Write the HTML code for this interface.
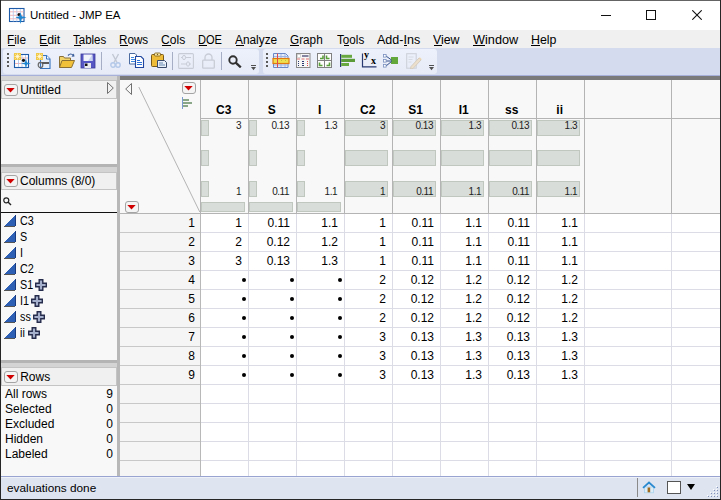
<!DOCTYPE html>
<html><head><meta charset="utf-8">
<style>
*{margin:0;padding:0;box-sizing:border-box}
html,body{width:721px;height:500px;overflow:hidden;background:#fff;font-family:"Liberation Sans",sans-serif;font-size:12px;color:#000}
.a{position:absolute}
.t{position:absolute;white-space:nowrap;line-height:14px;height:14px}
u{text-decoration:none;border-bottom:1px solid #000;display:inline-block;line-height:11px}
</style></head><body>
<div class="a" style="left:0px;top:0px;width:721px;height:500px;background:#fff"></div>
<svg class="a" style="left:8px;top:7px" width="19" height="18" viewBox="0 0 19 18"><rect x="1.5" y="1.5" width="14.5" height="13" fill="#fff" stroke="#1d5aa8" stroke-width="1.1"/><path d="M2 4.8h13.5M2 8.3h13.5M2 11.8h13.5" stroke="#f4a4a4" stroke-width="0.8"/><path d="M5.3 2v12.5M8.8 2v12.5M12.3 2v12.5" stroke="#b4c8ec" stroke-width="0.8"/><circle cx="11" cy="7.5" r="1.5" fill="#111"/><path d="M7.5 10.5L11.2 9.2 12.5 5.5 13.8 9.2 18.5 10.5 13.8 11.8 12.5 17 11.2 11.8z" fill="#1f86d0"/></svg>
<div class="t" style="left:30px;top:8px;font-size:11.5px;color:#000">Untitled - JMP EA</div>
<div class="a" style="left:601px;top:15px;width:10px;height:1px;background:#111"></div>
<div class="a" style="left:646px;top:10px;width:10px;height:10px;border:1px solid #111"></div>
<svg class="a" style="left:692px;top:10px" width="10" height="10" viewBox="0 0 10 10"><path d="M0.3 0.3L9.7 9.7M9.7 0.3L0.3 9.7" stroke="#111" stroke-width="1.1"/></svg>
<div class="a" style="left:1px;top:30px;width:719px;height:18px;background:#f0f0f0"></div>
<div class="t" style="left:7.40px;top:33px;transform:scaleX(0.983);transform-origin:0 0">File</div>
<div class="a" style="left:8px;top:45px;width:7px;height:1px;background:#000"></div>
<div class="t" style="left:39.20px;top:33px;transform:scaleX(1.025);transform-origin:0 0">Edit</div>
<div class="a" style="left:40px;top:45px;width:8px;height:1px;background:#000"></div>
<div class="t" style="left:73.20px;top:33px;transform:scaleX(0.957);transform-origin:0 0">Tables</div>
<div class="a" style="left:74px;top:45px;width:7px;height:1px;background:#000"></div>
<div class="t" style="left:119.20px;top:33px;transform:scaleX(0.973);transform-origin:0 0">Rows</div>
<div class="a" style="left:120px;top:45px;width:8px;height:1px;background:#000"></div>
<div class="t" style="left:161.20px;top:33px;transform:scaleX(1.008);transform-origin:0 0">Cols</div>
<div class="a" style="left:162px;top:45px;width:9px;height:1px;background:#000"></div>
<div class="t" style="left:198.40px;top:33px;transform:scaleX(0.923);transform-origin:0 0">DOE</div>
<div class="a" style="left:199px;top:45px;width:8px;height:1px;background:#000"></div>
<div class="t" style="left:235.20px;top:33px;transform:scaleX(0.988);transform-origin:0 0">Analyze</div>
<div class="a" style="left:236px;top:45px;width:8px;height:1px;background:#000"></div>
<div class="t" style="left:290.20px;top:33px;transform:scaleX(0.980);transform-origin:0 0">Graph</div>
<div class="a" style="left:290px;top:45px;width:9px;height:1px;background:#000"></div>
<div class="t" style="left:336.50px;top:33px;transform:scaleX(0.971);transform-origin:0 0">Tools</div>
<div class="a" style="left:344px;top:45px;width:5px;height:1px;background:#000"></div>
<div class="t" style="left:377.20px;top:33px;transform:scaleX(1.045);transform-origin:0 0">Add-Ins</div>
<div class="a" style="left:404px;top:45px;width:3px;height:1px;background:#000"></div>
<div class="t" style="left:433.20px;top:33px;transform:scaleX(1.027);transform-origin:0 0">View</div>
<div class="a" style="left:434px;top:45px;width:8px;height:1px;background:#000"></div>
<div class="t" style="left:472.50px;top:33px;transform:scaleX(1.059);transform-origin:0 0">Window</div>
<div class="a" style="left:473px;top:45px;width:12px;height:1px;background:#000"></div>
<div class="t" style="left:530.90px;top:33px;transform:scaleX(1.033);transform-origin:0 0">Help</div>
<div class="a" style="left:531px;top:45px;width:9px;height:1px;background:#000"></div>
<div class="a" style="left:1px;top:48px;width:719px;height:27px;background:#d5dbee"></div>
<div class="a" style="left:3px;top:49px;width:256px;height:25px;background:linear-gradient(#edf1fb,#e6ebf7);border-radius:3px"></div>
<div class="a" style="left:263px;top:49px;width:174px;height:25px;background:linear-gradient(#edf1fb,#e6ebf7);border-radius:3px"></div>
<div class="a" style="left:1px;top:75px;width:719px;height:1px;background:#a7b0d8"></div>
<div class="a" style="left:7px;top:53px;width:2px;height:2px;background:#5a5a5a"></div>
<div class="a" style="left:7px;top:57px;width:2px;height:2px;background:#5a5a5a"></div>
<div class="a" style="left:7px;top:61px;width:2px;height:2px;background:#5a5a5a"></div>
<div class="a" style="left:7px;top:65px;width:2px;height:2px;background:#5a5a5a"></div>
<div class="a" style="left:266px;top:53px;width:2px;height:2px;background:#5a5a5a"></div>
<div class="a" style="left:266px;top:57px;width:2px;height:2px;background:#5a5a5a"></div>
<div class="a" style="left:266px;top:61px;width:2px;height:2px;background:#5a5a5a"></div>
<div class="a" style="left:266px;top:65px;width:2px;height:2px;background:#5a5a5a"></div>
<div class="a" style="left:101px;top:52px;width:1px;height:18px;background:#a6aec6"></div>
<div class="a" style="left:172px;top:52px;width:1px;height:18px;background:#a6aec6"></div>
<div class="a" style="left:221px;top:52px;width:1px;height:18px;background:#a6aec6"></div>
<svg class="a" style="left:13px;top:52px" width="18" height="17" viewBox="0 0 18 17"><rect x="1.5" y="2.5" width="14" height="13" fill="#fff" stroke="#1d5aa8" stroke-width="1.1"/><path d="M2 6h13M2 11.5h13" stroke="#f0a0a0" stroke-width="0.8"/><path d="M5.5 3v12M9 3v12M12.5 3v12" stroke="#a8c0e8" stroke-width="0.8"/><rect x="1" y="1" width="7" height="7" fill="#f0c84a"/><path d="M4.5 1.5v6M1.5 4.5h6M2.3 2.3l4.4 4.4M6.7 2.3l-4.4 4.4" stroke="#fff3c0" stroke-width="0.8"/><circle cx="4.5" cy="4.5" r="1.1" fill="#fffbe8"/><circle cx="10.5" cy="8.3" r="1.6" fill="#111"/><path d="M8 11.5L12 10.6 13 6.5 14 10.6 17.8 11.5 14 12.4 13 16.5 12 12.4z" fill="#1f86d0"/></svg>
<svg class="a" style="left:35px;top:52px" width="18" height="17" viewBox="0 0 18 17"><path d="M5.5 3.5h6l3.5 3.5v9.5h-9.5z" fill="#e4eefa" stroke="#3673bd" stroke-width="1.1"/><path d="M11.5 3.5v3.5h3.5" fill="#fff" stroke="#3673bd" stroke-width="1"/><rect x="1" y="1" width="7" height="7" fill="#f0c84a"/><path d="M4.5 1.5v6M1.5 4.5h6M2.3 2.3l4.4 4.4M6.7 2.3l-4.4 4.4" stroke="#fff3c0" stroke-width="0.8"/><circle cx="4.5" cy="4.5" r="1.1" fill="#fffbe8"/><ellipse cx="5.5" cy="13" rx="2.3" ry="2.6" fill="none" stroke="#6a6a6a" stroke-width="1.2"/><rect x="7" y="10" width="7" height="2" fill="#5a5a5a"/></svg>
<svg class="a" style="left:58px;top:52px" width="18" height="17" viewBox="0 0 18 17"><path d="M1.5 4.5h4l1 1.5h6v9.5h-11z" fill="#f3d46a" stroke="#8a7034" stroke-width="1"/><path d="M4 8.5h12.5l-3 7h-12z" fill="#f2c13c" stroke="#8a7034" stroke-width="1"/><path d="M10 3.5q2.5-3 5.5 0" fill="none" stroke="#3b5d9a" stroke-width="1.2"/><path d="M13.5 4.8l3-0.3-0.6-3z" fill="#3b5d9a"/></svg>
<svg class="a" style="left:80px;top:53px" width="16" height="16" viewBox="0 0 16 16"><rect x="1" y="1" width="14" height="14" fill="#5656c4" stroke="#3a3a9a" stroke-width="0.8"/><rect x="3.5" y="1.5" width="9" height="6.5" fill="#f2f4fb"/><path d="M12 2l-4 6h4.5z" fill="#c8d4f0"/><rect x="4.5" y="10" width="6.5" height="5" fill="#e8eaf0"/><rect x="5" y="10.5" width="2.5" height="2.5" fill="#111"/></svg>
<svg class="a" style="left:110px;top:53px" width="11" height="16" viewBox="0 0 11 16"><path d="M2.5 1l4.5 8.5M8.5 1l-4.5 8.5" stroke="#c2c8d4" stroke-width="1.4" fill="none"/><circle cx="3" cy="12" r="2.2" fill="none" stroke="#b4c8e8" stroke-width="1.4"/><circle cx="8" cy="12" r="2.2" fill="none" stroke="#b4c8e8" stroke-width="1.4"/></svg>
<svg class="a" style="left:128px;top:53px" width="17" height="15" viewBox="0 0 17 15"><path d="M1.5 0.5h5.5l1.5 1.5v9h-7z" fill="#fff" stroke="#4a6aa0" stroke-width="1"/><path d="M3 4.5h3M3 6.5h4M3 8.5h4" stroke="#3a86e0" stroke-width="1"/><path d="M7.5 3.5h5.5l2.5 2.5v8.5h-8z" fill="#fff" stroke="#2046a0" stroke-width="1.1"/><path d="M9 7.5h3M9 9.5h5M9 11.5h5" stroke="#2a70d8" stroke-width="1"/></svg>
<svg class="a" style="left:150px;top:52px" width="18" height="17" viewBox="0 0 18 17"><rect x="1.5" y="2.5" width="12" height="12" rx="1" fill="#eebc38" stroke="#7a5a18" stroke-width="1"/><rect x="4.5" y="1" width="6" height="3" rx="1" fill="#fbe9a8" stroke="#7a5a18" stroke-width="0.8"/><circle cx="7.5" cy="2.5" r="0.7" fill="#7a5a18"/><path d="M7.5 8.5h7l2 2v5h-9z" fill="#e8eef8" stroke="#3a4a6a" stroke-width="1"/><path d="M9 11h4M9 13h6" stroke="#5a7aa8" stroke-width="0.9"/></svg>
<svg class="a" style="left:178px;top:53px" width="16" height="16" viewBox="0 0 16 16"><rect x="0.6" y="0.6" width="14.8" height="14.8" rx="1" fill="none" stroke="#c8ccd6" stroke-width="1.1"/><path d="M3 4.5h10M3 11h10" stroke="#c8ccd6" stroke-width="1.1"/><ellipse cx="6" cy="4.5" rx="1.5" ry="2.2" fill="#e9eef9" stroke="#c8ccd6"/><ellipse cx="10" cy="11" rx="1.5" ry="2.2" fill="#e9eef9" stroke="#c8ccd6"/></svg>
<svg class="a" style="left:202px;top:53px" width="13" height="16" viewBox="0 0 13 16"><path d="M3 7V4.5a3.5 3.5 0 0 1 7 0V7" fill="none" stroke="#c8ccd6" stroke-width="1.3"/><rect x="0.7" y="7.2" width="11.6" height="8" rx="0.8" fill="none" stroke="#c8ccd6" stroke-width="1.3"/></svg>
<svg class="a" style="left:228px;top:55px" width="14" height="13" viewBox="0 0 14 13"><circle cx="5" cy="5" r="3.7" fill="none" stroke="#303030" stroke-width="1.9"/><path d="M7.7 7.7L12.8 12.4" stroke="#303030" stroke-width="2.3"/></svg>
<div class="a" style="left:251px;top:65px;width:5px;height:1px;background:#505050"></div>
<svg class="a" style="left:251px;top:67px" width="5" height="4" viewBox="0 0 5 4"><path d="M0 0h5l-2.5 3.2z" fill="#505050"/></svg>
<div class="a" style="left:429px;top:65px;width:5px;height:1px;background:#505050"></div>
<svg class="a" style="left:429px;top:67px" width="5" height="4" viewBox="0 0 5 4"><path d="M0 0h5l-2.5 3.2z" fill="#505050"/></svg>
<svg class="a" style="left:272px;top:52px" width="18" height="17" viewBox="0 0 18 17"><path d="M1.5 1.5h12l2.5 2.5v11.5h-14.5z" fill="#e4ecfa" stroke="#6a88c8" stroke-width="1"/><path d="M2 4.5h13.5M2 13h13.5" stroke="#9ab0e0" stroke-width="0.9"/><path d="M9 2v13M13 2v13" stroke="#9ab0e0" stroke-width="0.9"/><rect x="1" y="6.5" width="16" height="5" fill="#f0e050" stroke="#e07a10" stroke-width="1.2"/><path d="M5.5 1.5v14" stroke="#e04a4a" stroke-width="1"/><path d="M9 8.5h1M13 8.5h1" stroke="#c0c040"/></svg>
<svg class="a" style="left:295px;top:52px" width="16" height="17" viewBox="0 0 16 17"><rect x="1.5" y="1.5" width="13.5" height="14" fill="#f6f6f6" stroke="#8a8a8a" stroke-width="1"/><rect x="2.5" y="2.5" width="3" height="3" fill="#fff" stroke="#c0c0c0" stroke-width="0.6"/><path d="M7 4h6.5" stroke="#3a3a6a" stroke-width="1.2"/><path d="M2 7h3M6.5 7h3M11 7h3" stroke="#e07070" stroke-width="1"/><path d="M3 9.5h1M3 11.5h1M3 13.5h1M7 9.5h2M7 11.5h2M7 13.5h2" stroke="#2a3a70" stroke-width="1.1"/><path d="M12 9.5h1M12 11.5h1M12 13.5h1" stroke="#e04a4a" stroke-width="1.1"/></svg>
<svg class="a" style="left:316px;top:52px" width="17" height="17" viewBox="0 0 17 17"><rect x="1.5" y="1.5" width="14" height="14" fill="#fdfdfd" stroke="#808080" stroke-width="1"/><path d="M8.5 1.5v14M1.5 8.5h14" stroke="#808080" stroke-width="1"/><path d="M4 6.5h3v-3M10.5 3.5v3h3M3.5 10.5v3h3M10.5 13.5h3v-3" stroke="#5aa03a" stroke-width="1.6" fill="none"/></svg>
<svg class="a" style="left:340px;top:54px" width="16" height="13" viewBox="0 0 16 13"><rect x="0" y="0" width="1.2" height="13" fill="#283870"/><rect x="1.2" y="0.8" width="10.8" height="3" fill="#68a840"/><rect x="1.2" y="4.8" width="13.8" height="3.2" fill="#5a9a38"/><rect x="1.2" y="9" width="7.8" height="3" fill="#68a840"/></svg>
<svg class="a" style="left:361px;top:53px" width="16" height="15" viewBox="0 0 16 15"><path d="M1.5 0.5v13.3H15.5" fill="none" stroke="#283870" stroke-width="1.2"/></svg>
<div class="t" style="left:364px;top:50px;font-size:10px;font-weight:bold;font-family:'Liberation Serif',serif;line-height:10px;height:10px">y</div>
<div class="t" style="left:371px;top:55.5px;font-size:10px;font-weight:bold;font-family:'Liberation Serif',serif;line-height:10px;height:10px">x</div>
<svg class="a" style="left:383px;top:54px" width="16" height="14" viewBox="0 0 16 14"><rect x="8" y="3" width="7" height="7" fill="#62a83a"/><path d="M3 2l5.5 4M3 7h5.5M3 12l5.5-4.5" stroke="#34508a" stroke-width="1"/><rect x="0.5" y="0.5" width="2.6" height="2.6" fill="#fff" stroke="#7a90c0" stroke-width="0.8"/><rect x="0.5" y="5.5" width="2.6" height="2.6" fill="#fff" stroke="#7a90c0" stroke-width="0.8"/><rect x="0.5" y="10.5" width="2.6" height="2.6" fill="#fff" stroke="#7a90c0" stroke-width="0.8"/></svg>
<svg class="a" style="left:406px;top:53px" width="16" height="16" viewBox="0 0 16 16"><rect x="0.7" y="0.7" width="9.5" height="14.5" fill="none" stroke="#cdd1d9" stroke-width="1.1"/><path d="M2.5 4h5M2.5 6.5h4M2.5 9h3" stroke="#d4d8e0" stroke-width="0.9"/><path d="M5 13.5l8-8.5 2 2-8 8.5-2.5 0.5z" fill="#ece0cc" stroke="#d4cabc" stroke-width="0.9"/><path d="M13 5l2 2 0.8-0.8-2-2z" fill="#f0d8b0"/></svg>
<div class="a" style="left:1px;top:76px;width:116px;height:4px;background:#d4d4d4"></div>
<div class="a" style="left:120px;top:76px;width:600px;height:4px;background:#7a7a7a"></div>
<div class="a" style="left:117px;top:76px;width:3px;height:401px;background:#b8b8b8"></div>
<div class="a" style="left:1px;top:80px;width:116px;height:84px;background:#f8f8f8"></div>
<div class="a" style="left:1px;top:80px;width:116px;height:19px;background:#f0f0f0;border:1px solid #c4c4c4"></div>
<div class="a" style="left:4px;top:84px;width:14px;height:12px;border:1px solid #a4a4a4;border-radius:3px;background:#f4f4f4"></div>
<svg class="a" style="left:6px;top:88px" width="9" height="5" viewBox="0 0 9 5"><path d="M0.3 0h8.4l-4.2 4.6z" fill="#d00000"/></svg>
<div class="t" style="left:20.2px;top:83px;font-size:12px">Untitled</div>
<svg class="a" style="left:106px;top:81px" width="9" height="14" viewBox="0 0 9 14"><path d="M1.5 1.5L7.3 7 1.5 12.5z" fill="none" stroke="#707070" stroke-width="1"/></svg>
<div class="a" style="left:1px;top:164px;width:116px;height:3px;background:#b4b4b4"></div>
<div class="a" style="left:1px;top:167px;width:116px;height:5px;background:#d4d4d4"></div>
<div class="a" style="left:1px;top:172px;width:116px;height:188px;background:#f8f8f8"></div>
<div class="a" style="left:1px;top:172px;width:116px;height:18px;background:#f0f0f0;border:1px solid #c4c4c4"></div>
<div class="a" style="left:4px;top:175px;width:14px;height:12px;border:1px solid #a4a4a4;border-radius:3px;background:#f4f4f4"></div>
<svg class="a" style="left:6px;top:179px" width="9" height="5" viewBox="0 0 9 5"><path d="M0.3 0h8.4l-4.2 4.6z" fill="#d00000"/></svg>
<div class="t" style="left:20px;top:174px;font-size:12px">Columns (8/0)</div>
<svg class="a" style="left:3px;top:197px" width="9" height="9" viewBox="0 0 9 9"><circle cx="3.3" cy="3.3" r="2.5" fill="none" stroke="#222" stroke-width="1.2"/><path d="M5 5l3 3" stroke="#222" stroke-width="1.4"/></svg>
<div class="a" style="left:1px;top:212px;width:116px;height:1px;background:#111"></div>
<svg class="a" style="left:4px;top:215px" width="12" height="12" viewBox="0 0 12 12" shape-rendering="crispEdges"><path d="M11 0V11H0z" fill="#2d5fb4"/><path d="M11 11H0" stroke="#555"/><path d="M11 0v11" stroke="#1a3a80"/></svg>
<div class="t" style="left:19.6px;top:214px;font-size:12px;transform:scaleX(0.9);transform-origin:0 0">C3</div>
<svg class="a" style="left:4px;top:231px" width="12" height="12" viewBox="0 0 12 12" shape-rendering="crispEdges"><path d="M11 0V11H0z" fill="#2d5fb4"/><path d="M11 11H0" stroke="#555"/><path d="M11 0v11" stroke="#1a3a80"/></svg>
<div class="t" style="left:19.6px;top:230px;font-size:12px;transform:scaleX(0.9);transform-origin:0 0">S</div>
<svg class="a" style="left:4px;top:247px" width="12" height="12" viewBox="0 0 12 12" shape-rendering="crispEdges"><path d="M11 0V11H0z" fill="#2d5fb4"/><path d="M11 11H0" stroke="#555"/><path d="M11 0v11" stroke="#1a3a80"/></svg>
<div class="t" style="left:19.6px;top:246px;font-size:12px;transform:scaleX(0.9);transform-origin:0 0">I</div>
<svg class="a" style="left:4px;top:263px" width="12" height="12" viewBox="0 0 12 12" shape-rendering="crispEdges"><path d="M11 0V11H0z" fill="#2d5fb4"/><path d="M11 11H0" stroke="#555"/><path d="M11 0v11" stroke="#1a3a80"/></svg>
<div class="t" style="left:19.6px;top:262px;font-size:12px;transform:scaleX(0.9);transform-origin:0 0">C2</div>
<svg class="a" style="left:4px;top:279px" width="12" height="12" viewBox="0 0 12 12" shape-rendering="crispEdges"><path d="M11 0V11H0z" fill="#2d5fb4"/><path d="M11 11H0" stroke="#555"/><path d="M11 0v11" stroke="#1a3a80"/></svg>
<div class="t" style="left:19.6px;top:278px;font-size:12px;transform:scaleX(0.9);transform-origin:0 0">S1</div>
<svg class="a" style="left:35px;top:279px" width="12" height="12" viewBox="0 0 12 12"><path d="M4.2 0.7h3.6v3.5h3.5v3.6h-3.5v3.5h-3.6v-3.5h-3.5v-3.6h3.5z" fill="#a4b0cc" stroke="#252c4c" stroke-width="1.4"/></svg>
<svg class="a" style="left:4px;top:295px" width="12" height="12" viewBox="0 0 12 12" shape-rendering="crispEdges"><path d="M11 0V11H0z" fill="#2d5fb4"/><path d="M11 11H0" stroke="#555"/><path d="M11 0v11" stroke="#1a3a80"/></svg>
<div class="t" style="left:19.6px;top:294px;font-size:12px;transform:scaleX(0.9);transform-origin:0 0">I1</div>
<svg class="a" style="left:31px;top:295px" width="12" height="12" viewBox="0 0 12 12"><path d="M4.2 0.7h3.6v3.5h3.5v3.6h-3.5v3.5h-3.6v-3.5h-3.5v-3.6h3.5z" fill="#a4b0cc" stroke="#252c4c" stroke-width="1.4"/></svg>
<svg class="a" style="left:4px;top:311px" width="12" height="12" viewBox="0 0 12 12" shape-rendering="crispEdges"><path d="M11 0V11H0z" fill="#2d5fb4"/><path d="M11 11H0" stroke="#555"/><path d="M11 0v11" stroke="#1a3a80"/></svg>
<div class="t" style="left:19.6px;top:310px;font-size:12px;transform:scaleX(0.9);transform-origin:0 0">ss</div>
<svg class="a" style="left:33px;top:311px" width="12" height="12" viewBox="0 0 12 12"><path d="M4.2 0.7h3.6v3.5h3.5v3.6h-3.5v3.5h-3.6v-3.5h-3.5v-3.6h3.5z" fill="#a4b0cc" stroke="#252c4c" stroke-width="1.4"/></svg>
<svg class="a" style="left:4px;top:327px" width="12" height="12" viewBox="0 0 12 12" shape-rendering="crispEdges"><path d="M11 0V11H0z" fill="#2d5fb4"/><path d="M11 11H0" stroke="#555"/><path d="M11 0v11" stroke="#1a3a80"/></svg>
<div class="t" style="left:19.6px;top:326px;font-size:12px;transform:scaleX(0.9);transform-origin:0 0">ii</div>
<svg class="a" style="left:28px;top:327px" width="12" height="12" viewBox="0 0 12 12"><path d="M4.2 0.7h3.6v3.5h3.5v3.6h-3.5v3.5h-3.6v-3.5h-3.5v-3.6h3.5z" fill="#a4b0cc" stroke="#252c4c" stroke-width="1.4"/></svg>
<div class="a" style="left:1px;top:360px;width:116px;height:3px;background:#b4b4b4"></div>
<div class="a" style="left:1px;top:363px;width:116px;height:4px;background:#d4d4d4"></div>
<div class="a" style="left:1px;top:367px;width:116px;height:109px;background:#f8f8f8"></div>
<div class="a" style="left:1px;top:367px;width:116px;height:19px;background:#f0f0f0;border:1px solid #c4c4c4"></div>
<div class="a" style="left:4px;top:371px;width:14px;height:12px;border:1px solid #a4a4a4;border-radius:3px;background:#f4f4f4"></div>
<svg class="a" style="left:6px;top:375px" width="9" height="5" viewBox="0 0 9 5"><path d="M0.3 0h8.4l-4.2 4.6z" fill="#d00000"/></svg>
<div class="t" style="left:20.2px;top:370px;font-size:12px">Rows</div>
<div class="t" style="left:5px;top:387px;font-size:12px">All rows</div>
<div class="t" style="right:608px;top:387px;text-align:right;font-size:12px">9</div>
<div class="t" style="left:5px;top:402px;font-size:12px">Selected</div>
<div class="t" style="right:608px;top:402px;text-align:right;font-size:12px">0</div>
<div class="t" style="left:5px;top:417px;font-size:12px">Excluded</div>
<div class="t" style="right:608px;top:417px;text-align:right;font-size:12px">0</div>
<div class="t" style="left:5px;top:432px;font-size:12px">Hidden</div>
<div class="t" style="right:608px;top:432px;text-align:right;font-size:12px">0</div>
<div class="t" style="left:5px;top:447px;font-size:12px">Labeled</div>
<div class="t" style="right:608px;top:447px;text-align:right;font-size:12px">0</div>
<div class="a" style="left:120px;top:80px;width:600px;height:133px;background:#f8f8f8"></div>
<div class="a" style="left:120px;top:213px;width:80px;height:263px;background:#f5f5f5"></div>
<div class="a" style="left:201px;top:214px;width:519px;height:262px;background:#fff"></div>
<div class="a" style="left:120px;top:232px;width:80px;height:1px;background:#c8c8c8"></div>
<div class="a" style="left:201px;top:232px;width:519px;height:1px;background:#dcdce6"></div>
<div class="a" style="left:120px;top:251px;width:80px;height:1px;background:#c8c8c8"></div>
<div class="a" style="left:201px;top:251px;width:519px;height:1px;background:#dcdce6"></div>
<div class="a" style="left:120px;top:270px;width:80px;height:1px;background:#c8c8c8"></div>
<div class="a" style="left:201px;top:270px;width:519px;height:1px;background:#dcdce6"></div>
<div class="a" style="left:120px;top:289px;width:80px;height:1px;background:#c8c8c8"></div>
<div class="a" style="left:201px;top:289px;width:519px;height:1px;background:#dcdce6"></div>
<div class="a" style="left:120px;top:308px;width:80px;height:1px;background:#c8c8c8"></div>
<div class="a" style="left:201px;top:308px;width:519px;height:1px;background:#dcdce6"></div>
<div class="a" style="left:120px;top:327px;width:80px;height:1px;background:#c8c8c8"></div>
<div class="a" style="left:201px;top:327px;width:519px;height:1px;background:#dcdce6"></div>
<div class="a" style="left:120px;top:346px;width:80px;height:1px;background:#c8c8c8"></div>
<div class="a" style="left:201px;top:346px;width:519px;height:1px;background:#dcdce6"></div>
<div class="a" style="left:120px;top:365px;width:80px;height:1px;background:#c8c8c8"></div>
<div class="a" style="left:201px;top:365px;width:519px;height:1px;background:#dcdce6"></div>
<div class="a" style="left:120px;top:384px;width:80px;height:1px;background:#c8c8c8"></div>
<div class="a" style="left:201px;top:384px;width:519px;height:1px;background:#dcdce6"></div>
<div class="a" style="left:120px;top:403px;width:80px;height:1px;background:#c8c8c8"></div>
<div class="a" style="left:201px;top:403px;width:519px;height:1px;background:#dcdce6"></div>
<div class="a" style="left:120px;top:422px;width:80px;height:1px;background:#c8c8c8"></div>
<div class="a" style="left:201px;top:422px;width:519px;height:1px;background:#dcdce6"></div>
<div class="a" style="left:120px;top:441px;width:80px;height:1px;background:#c8c8c8"></div>
<div class="a" style="left:201px;top:441px;width:519px;height:1px;background:#dcdce6"></div>
<div class="a" style="left:120px;top:460px;width:80px;height:1px;background:#c8c8c8"></div>
<div class="a" style="left:201px;top:460px;width:519px;height:1px;background:#dcdce6"></div>
<div class="a" style="left:248px;top:213px;width:1px;height:263px;background:#dcdce6"></div>
<div class="a" style="left:296px;top:213px;width:1px;height:263px;background:#dcdce6"></div>
<div class="a" style="left:344px;top:213px;width:1px;height:263px;background:#dcdce6"></div>
<div class="a" style="left:392px;top:213px;width:1px;height:263px;background:#dcdce6"></div>
<div class="a" style="left:440px;top:213px;width:1px;height:263px;background:#dcdce6"></div>
<div class="a" style="left:488px;top:213px;width:1px;height:263px;background:#dcdce6"></div>
<div class="a" style="left:536px;top:213px;width:1px;height:263px;background:#dcdce6"></div>
<div class="a" style="left:584px;top:213px;width:1px;height:263px;background:#dcdce6"></div>
<div class="a" style="left:671px;top:213px;width:1px;height:263px;background:#dcdce6"></div>
<div class="a" style="left:200px;top:213px;width:1px;height:263px;background:#b8b8b8"></div>
<div class="a" style="left:200px;top:80px;width:1px;height:133px;background:#b4b4b4"></div>
<div class="a" style="left:248px;top:80px;width:1px;height:133px;background:#b4b4b4"></div>
<div class="a" style="left:296px;top:80px;width:1px;height:133px;background:#b4b4b4"></div>
<div class="a" style="left:344px;top:80px;width:1px;height:133px;background:#b4b4b4"></div>
<div class="a" style="left:392px;top:80px;width:1px;height:133px;background:#b4b4b4"></div>
<div class="a" style="left:440px;top:80px;width:1px;height:133px;background:#b4b4b4"></div>
<div class="a" style="left:488px;top:80px;width:1px;height:133px;background:#b4b4b4"></div>
<div class="a" style="left:536px;top:80px;width:1px;height:133px;background:#b4b4b4"></div>
<div class="a" style="left:584px;top:80px;width:1px;height:133px;background:#b4b4b4"></div>
<div class="a" style="left:671px;top:80px;width:1px;height:133px;background:#b4b4b4"></div>
<div class="a" style="left:200px;top:118px;width:520px;height:1px;background:#b4b4b4"></div>
<div class="a" style="left:120px;top:213px;width:600px;height:1px;background:#b4b4b4"></div>
<svg class="a" style="left:120px;top:80px" width="80" height="134" viewBox="0 0 80 134"><path d="M18.8 7L79.8 132" stroke="#b4b4b4" stroke-width="1" fill="none"/></svg>
<svg class="a" style="left:125px;top:82px" width="9" height="14" viewBox="0 0 9 14"><path d="M6.5 1.5L0.7 7 6.5 12.5z" fill="none" stroke="#707070" stroke-width="1"/></svg>
<div class="a" style="left:182px;top:82px;width:14px;height:12px;border:1px solid #a4a4a4;border-radius:3px;background:#f4f4f4"></div>
<svg class="a" style="left:184px;top:86px" width="9" height="5" viewBox="0 0 9 5"><path d="M0.3 0h8.4l-4.2 4.6z" fill="#d00000"/></svg>
<div class="a" style="left:182px;top:97px;width:1px;height:12px;background:#7a9ad0"></div>
<div class="a" style="left:183px;top:99px;width:6px;height:2px;background:#8aa888"></div>
<div class="a" style="left:183px;top:102px;width:9px;height:2px;background:#8aa888"></div>
<div class="a" style="left:183px;top:105px;width:5px;height:2px;background:#8aa888"></div>
<div class="a" style="left:125px;top:201px;width:14px;height:12px;border:1px solid #a4a4a4;border-radius:3px;background:#f4f4f4"></div>
<svg class="a" style="left:127px;top:205px" width="9" height="5" viewBox="0 0 9 5"><path d="M0.3 0h8.4l-4.2 4.6z" fill="#d00000"/></svg>
<div class="t" style="left:173.7px;top:103px;width:100px;text-align:center;font-weight:bold;font-size:12px">C3</div>
<div class="t" style="left:221.7px;top:103px;width:100px;text-align:center;font-weight:bold;font-size:12px">S</div>
<div class="t" style="left:269.7px;top:103px;width:100px;text-align:center;font-weight:bold;font-size:12px">I</div>
<div class="t" style="left:317.7px;top:103px;width:100px;text-align:center;font-weight:bold;font-size:12px">C2</div>
<div class="t" style="left:365.7px;top:103px;width:100px;text-align:center;font-weight:bold;font-size:12px">S1</div>
<div class="t" style="left:413.7px;top:103px;width:100px;text-align:center;font-weight:bold;font-size:12px">I1</div>
<div class="t" style="left:461.7px;top:103px;width:100px;text-align:center;font-weight:bold;font-size:12px">ss</div>
<div class="t" style="left:509.70000000000005px;top:103px;width:100px;text-align:center;font-weight:bold;font-size:12px">ii</div>
<div class="a" style="left:201px;top:120px;width:8px;height:16px;background:#d9ddd9;border:1px solid #bfc7bf"></div>
<div class="a" style="left:201px;top:150px;width:8px;height:16px;background:#d9ddd9;border:1px solid #bfc7bf"></div>
<div class="a" style="left:201px;top:181px;width:8px;height:16px;background:#d9ddd9;border:1px solid #bfc7bf"></div>
<div class="a" style="left:201px;top:202px;width:44px;height:10px;background:#d9ddd9;border:1px solid #bfc7bf"></div>
<div class="t" style="right:480px;top:119px;text-align:right;font-size:10px;letter-spacing:-0.5px;color:#222">3</div>
<div class="t" style="right:480px;top:185px;text-align:right;font-size:10px;letter-spacing:-0.5px;color:#222">1</div>
<div class="a" style="left:249px;top:120px;width:8px;height:16px;background:#d9ddd9;border:1px solid #bfc7bf"></div>
<div class="a" style="left:249px;top:150px;width:8px;height:16px;background:#d9ddd9;border:1px solid #bfc7bf"></div>
<div class="a" style="left:249px;top:181px;width:8px;height:16px;background:#d9ddd9;border:1px solid #bfc7bf"></div>
<div class="a" style="left:249px;top:202px;width:44px;height:10px;background:#d9ddd9;border:1px solid #bfc7bf"></div>
<div class="t" style="right:432px;top:119px;text-align:right;font-size:10px;letter-spacing:-0.5px;color:#222">0.13</div>
<div class="t" style="right:432px;top:185px;text-align:right;font-size:10px;letter-spacing:-0.5px;color:#222">0.11</div>
<div class="a" style="left:297px;top:120px;width:8px;height:16px;background:#d9ddd9;border:1px solid #bfc7bf"></div>
<div class="a" style="left:297px;top:150px;width:8px;height:16px;background:#d9ddd9;border:1px solid #bfc7bf"></div>
<div class="a" style="left:297px;top:181px;width:8px;height:16px;background:#d9ddd9;border:1px solid #bfc7bf"></div>
<div class="a" style="left:297px;top:202px;width:44px;height:10px;background:#d9ddd9;border:1px solid #bfc7bf"></div>
<div class="t" style="right:384px;top:119px;text-align:right;font-size:10px;letter-spacing:-0.5px;color:#222">1.3</div>
<div class="t" style="right:384px;top:185px;text-align:right;font-size:10px;letter-spacing:-0.5px;color:#222">1.1</div>
<div class="a" style="left:345px;top:120px;width:43px;height:16px;background:#d9ddd9;border:1px solid #bfc7bf"></div>
<div class="a" style="left:345px;top:150px;width:43px;height:16px;background:#d9ddd9;border:1px solid #bfc7bf"></div>
<div class="a" style="left:345px;top:181px;width:43px;height:16px;background:#d9ddd9;border:1px solid #bfc7bf"></div>
<div class="t" style="right:336px;top:119px;text-align:right;font-size:10px;letter-spacing:-0.5px;color:#222">3</div>
<div class="t" style="right:336px;top:185px;text-align:right;font-size:10px;letter-spacing:-0.5px;color:#222">1</div>
<div class="a" style="left:393px;top:120px;width:43px;height:16px;background:#d9ddd9;border:1px solid #bfc7bf"></div>
<div class="a" style="left:393px;top:150px;width:43px;height:16px;background:#d9ddd9;border:1px solid #bfc7bf"></div>
<div class="a" style="left:393px;top:181px;width:43px;height:16px;background:#d9ddd9;border:1px solid #bfc7bf"></div>
<div class="t" style="right:288px;top:119px;text-align:right;font-size:10px;letter-spacing:-0.5px;color:#222">0.13</div>
<div class="t" style="right:288px;top:185px;text-align:right;font-size:10px;letter-spacing:-0.5px;color:#222">0.11</div>
<div class="a" style="left:441px;top:120px;width:43px;height:16px;background:#d9ddd9;border:1px solid #bfc7bf"></div>
<div class="a" style="left:441px;top:150px;width:43px;height:16px;background:#d9ddd9;border:1px solid #bfc7bf"></div>
<div class="a" style="left:441px;top:181px;width:43px;height:16px;background:#d9ddd9;border:1px solid #bfc7bf"></div>
<div class="t" style="right:240px;top:119px;text-align:right;font-size:10px;letter-spacing:-0.5px;color:#222">1.3</div>
<div class="t" style="right:240px;top:185px;text-align:right;font-size:10px;letter-spacing:-0.5px;color:#222">1.1</div>
<div class="a" style="left:489px;top:120px;width:43px;height:16px;background:#d9ddd9;border:1px solid #bfc7bf"></div>
<div class="a" style="left:489px;top:150px;width:43px;height:16px;background:#d9ddd9;border:1px solid #bfc7bf"></div>
<div class="a" style="left:489px;top:181px;width:43px;height:16px;background:#d9ddd9;border:1px solid #bfc7bf"></div>
<div class="t" style="right:192px;top:119px;text-align:right;font-size:10px;letter-spacing:-0.5px;color:#222">0.13</div>
<div class="t" style="right:192px;top:185px;text-align:right;font-size:10px;letter-spacing:-0.5px;color:#222">0.11</div>
<div class="a" style="left:537px;top:120px;width:43px;height:16px;background:#d9ddd9;border:1px solid #bfc7bf"></div>
<div class="a" style="left:537px;top:150px;width:43px;height:16px;background:#d9ddd9;border:1px solid #bfc7bf"></div>
<div class="a" style="left:537px;top:181px;width:43px;height:16px;background:#d9ddd9;border:1px solid #bfc7bf"></div>
<div class="t" style="right:144px;top:119px;text-align:right;font-size:10px;letter-spacing:-0.5px;color:#222">1.3</div>
<div class="t" style="right:144px;top:185px;text-align:right;font-size:10px;letter-spacing:-0.5px;color:#222">1.1</div>
<div class="t" style="right:526px;top:216px;text-align:right;font-size:12px">1</div>
<div class="t" style="right:479px;top:216px;text-align:right;font-size:12px">1</div>
<div class="t" style="right:431px;top:216px;text-align:right;font-size:12px">0.11</div>
<div class="t" style="right:383px;top:216px;text-align:right;font-size:12px">1.1</div>
<div class="t" style="right:335px;top:216px;text-align:right;font-size:12px">1</div>
<div class="t" style="right:287px;top:216px;text-align:right;font-size:12px">0.11</div>
<div class="t" style="right:239px;top:216px;text-align:right;font-size:12px">1.1</div>
<div class="t" style="right:191px;top:216px;text-align:right;font-size:12px">0.11</div>
<div class="t" style="right:143px;top:216px;text-align:right;font-size:12px">1.1</div>
<div class="t" style="right:526px;top:235px;text-align:right;font-size:12px">2</div>
<div class="t" style="right:479px;top:235px;text-align:right;font-size:12px">2</div>
<div class="t" style="right:431px;top:235px;text-align:right;font-size:12px">0.12</div>
<div class="t" style="right:383px;top:235px;text-align:right;font-size:12px">1.2</div>
<div class="t" style="right:335px;top:235px;text-align:right;font-size:12px">1</div>
<div class="t" style="right:287px;top:235px;text-align:right;font-size:12px">0.11</div>
<div class="t" style="right:239px;top:235px;text-align:right;font-size:12px">1.1</div>
<div class="t" style="right:191px;top:235px;text-align:right;font-size:12px">0.11</div>
<div class="t" style="right:143px;top:235px;text-align:right;font-size:12px">1.1</div>
<div class="t" style="right:526px;top:254px;text-align:right;font-size:12px">3</div>
<div class="t" style="right:479px;top:254px;text-align:right;font-size:12px">3</div>
<div class="t" style="right:431px;top:254px;text-align:right;font-size:12px">0.13</div>
<div class="t" style="right:383px;top:254px;text-align:right;font-size:12px">1.3</div>
<div class="t" style="right:335px;top:254px;text-align:right;font-size:12px">1</div>
<div class="t" style="right:287px;top:254px;text-align:right;font-size:12px">0.11</div>
<div class="t" style="right:239px;top:254px;text-align:right;font-size:12px">1.1</div>
<div class="t" style="right:191px;top:254px;text-align:right;font-size:12px">0.11</div>
<div class="t" style="right:143px;top:254px;text-align:right;font-size:12px">1.1</div>
<div class="t" style="right:526px;top:273px;text-align:right;font-size:12px">4</div>
<div class="a" style="left:242px;top:278px;width:4px;height:4px;background:#000;border-radius:2px"></div>
<div class="a" style="left:290px;top:278px;width:4px;height:4px;background:#000;border-radius:2px"></div>
<div class="a" style="left:338px;top:278px;width:4px;height:4px;background:#000;border-radius:2px"></div>
<div class="t" style="right:335px;top:273px;text-align:right;font-size:12px">2</div>
<div class="t" style="right:287px;top:273px;text-align:right;font-size:12px">0.12</div>
<div class="t" style="right:239px;top:273px;text-align:right;font-size:12px">1.2</div>
<div class="t" style="right:191px;top:273px;text-align:right;font-size:12px">0.12</div>
<div class="t" style="right:143px;top:273px;text-align:right;font-size:12px">1.2</div>
<div class="t" style="right:526px;top:292px;text-align:right;font-size:12px">5</div>
<div class="a" style="left:242px;top:297px;width:4px;height:4px;background:#000;border-radius:2px"></div>
<div class="a" style="left:290px;top:297px;width:4px;height:4px;background:#000;border-radius:2px"></div>
<div class="a" style="left:338px;top:297px;width:4px;height:4px;background:#000;border-radius:2px"></div>
<div class="t" style="right:335px;top:292px;text-align:right;font-size:12px">2</div>
<div class="t" style="right:287px;top:292px;text-align:right;font-size:12px">0.12</div>
<div class="t" style="right:239px;top:292px;text-align:right;font-size:12px">1.2</div>
<div class="t" style="right:191px;top:292px;text-align:right;font-size:12px">0.12</div>
<div class="t" style="right:143px;top:292px;text-align:right;font-size:12px">1.2</div>
<div class="t" style="right:526px;top:311px;text-align:right;font-size:12px">6</div>
<div class="a" style="left:242px;top:316px;width:4px;height:4px;background:#000;border-radius:2px"></div>
<div class="a" style="left:290px;top:316px;width:4px;height:4px;background:#000;border-radius:2px"></div>
<div class="a" style="left:338px;top:316px;width:4px;height:4px;background:#000;border-radius:2px"></div>
<div class="t" style="right:335px;top:311px;text-align:right;font-size:12px">2</div>
<div class="t" style="right:287px;top:311px;text-align:right;font-size:12px">0.12</div>
<div class="t" style="right:239px;top:311px;text-align:right;font-size:12px">1.2</div>
<div class="t" style="right:191px;top:311px;text-align:right;font-size:12px">0.12</div>
<div class="t" style="right:143px;top:311px;text-align:right;font-size:12px">1.2</div>
<div class="t" style="right:526px;top:330px;text-align:right;font-size:12px">7</div>
<div class="a" style="left:242px;top:335px;width:4px;height:4px;background:#000;border-radius:2px"></div>
<div class="a" style="left:290px;top:335px;width:4px;height:4px;background:#000;border-radius:2px"></div>
<div class="a" style="left:338px;top:335px;width:4px;height:4px;background:#000;border-radius:2px"></div>
<div class="t" style="right:335px;top:330px;text-align:right;font-size:12px">3</div>
<div class="t" style="right:287px;top:330px;text-align:right;font-size:12px">0.13</div>
<div class="t" style="right:239px;top:330px;text-align:right;font-size:12px">1.3</div>
<div class="t" style="right:191px;top:330px;text-align:right;font-size:12px">0.13</div>
<div class="t" style="right:143px;top:330px;text-align:right;font-size:12px">1.3</div>
<div class="t" style="right:526px;top:349px;text-align:right;font-size:12px">8</div>
<div class="a" style="left:242px;top:354px;width:4px;height:4px;background:#000;border-radius:2px"></div>
<div class="a" style="left:290px;top:354px;width:4px;height:4px;background:#000;border-radius:2px"></div>
<div class="a" style="left:338px;top:354px;width:4px;height:4px;background:#000;border-radius:2px"></div>
<div class="t" style="right:335px;top:349px;text-align:right;font-size:12px">3</div>
<div class="t" style="right:287px;top:349px;text-align:right;font-size:12px">0.13</div>
<div class="t" style="right:239px;top:349px;text-align:right;font-size:12px">1.3</div>
<div class="t" style="right:191px;top:349px;text-align:right;font-size:12px">0.13</div>
<div class="t" style="right:143px;top:349px;text-align:right;font-size:12px">1.3</div>
<div class="t" style="right:526px;top:368px;text-align:right;font-size:12px">9</div>
<div class="a" style="left:242px;top:373px;width:4px;height:4px;background:#000;border-radius:2px"></div>
<div class="a" style="left:290px;top:373px;width:4px;height:4px;background:#000;border-radius:2px"></div>
<div class="a" style="left:338px;top:373px;width:4px;height:4px;background:#000;border-radius:2px"></div>
<div class="t" style="right:335px;top:368px;text-align:right;font-size:12px">3</div>
<div class="t" style="right:287px;top:368px;text-align:right;font-size:12px">0.13</div>
<div class="t" style="right:239px;top:368px;text-align:right;font-size:12px">1.3</div>
<div class="t" style="right:191px;top:368px;text-align:right;font-size:12px">0.13</div>
<div class="t" style="right:143px;top:368px;text-align:right;font-size:12px">1.3</div>
<div class="a" style="left:1px;top:476px;width:719px;height:1px;background:#9aa4d0"></div>
<div class="a" style="left:1px;top:477px;width:719px;height:1px;background:#eef1f8"></div>
<div class="a" style="left:1px;top:478px;width:719px;height:21px;background:#dfe5f0"></div>
<div class="t" style="left:7px;top:481px;font-size:11.8px">evaluations done</div>
<div class="a" style="left:637px;top:478px;width:1px;height:19px;background:#8a8a8a"></div>
<svg class="a" style="left:642px;top:481px" width="14" height="13" viewBox="0 0 14 13"><rect x="2.5" y="6" width="9" height="5.8" fill="#dcedf8" stroke="#a8d0ec" stroke-width="0.8"/><path d="M1 6.8L7 1.5 13 6.8" fill="none" stroke="#2a8ad0" stroke-width="1.8"/><rect x="5.6" y="6.5" width="2.6" height="4.8" fill="#a06a1c"/></svg>
<div class="a" style="left:667px;top:481px;width:14px;height:13px;background:#fff;border:1px solid #555"></div>
<svg class="a" style="left:687px;top:484px" width="8" height="6" viewBox="0 0 8 6"><path d="M0 0h8l-4 6z" fill="#000"/></svg>
<div class="a" style="left:716px;top:486px;width:1px;height:1px;background:#fbfcfe"></div>
<div class="a" style="left:717px;top:487px;width:1px;height:1px;background:#8090b8"></div>
<div class="a" style="left:713px;top:489px;width:1px;height:1px;background:#fbfcfe"></div>
<div class="a" style="left:714px;top:490px;width:1px;height:1px;background:#8090b8"></div>
<div class="a" style="left:716px;top:489px;width:1px;height:1px;background:#fbfcfe"></div>
<div class="a" style="left:717px;top:490px;width:1px;height:1px;background:#8090b8"></div>
<div class="a" style="left:710px;top:492px;width:1px;height:1px;background:#fbfcfe"></div>
<div class="a" style="left:711px;top:493px;width:1px;height:1px;background:#8090b8"></div>
<div class="a" style="left:713px;top:492px;width:1px;height:1px;background:#fbfcfe"></div>
<div class="a" style="left:714px;top:493px;width:1px;height:1px;background:#8090b8"></div>
<div class="a" style="left:716px;top:492px;width:1px;height:1px;background:#fbfcfe"></div>
<div class="a" style="left:717px;top:493px;width:1px;height:1px;background:#8090b8"></div>
<div class="a" style="left:707px;top:495px;width:1px;height:1px;background:#fbfcfe"></div>
<div class="a" style="left:708px;top:496px;width:1px;height:1px;background:#8090b8"></div>
<div class="a" style="left:710px;top:495px;width:1px;height:1px;background:#fbfcfe"></div>
<div class="a" style="left:711px;top:496px;width:1px;height:1px;background:#8090b8"></div>
<div class="a" style="left:713px;top:495px;width:1px;height:1px;background:#fbfcfe"></div>
<div class="a" style="left:714px;top:496px;width:1px;height:1px;background:#8090b8"></div>
<div class="a" style="left:716px;top:495px;width:1px;height:1px;background:#fbfcfe"></div>
<div class="a" style="left:717px;top:496px;width:1px;height:1px;background:#8090b8"></div>
<div class="a" style="left:0px;top:0px;width:721px;height:1px;background:#646464"></div>
<div class="a" style="left:0px;top:0px;width:1px;height:500px;background:#262626"></div>
<div class="a" style="left:720px;top:0px;width:1px;height:500px;background:#262626"></div>
<div class="a" style="left:0px;top:499px;width:721px;height:1px;background:#262626"></div>
</body></html>
